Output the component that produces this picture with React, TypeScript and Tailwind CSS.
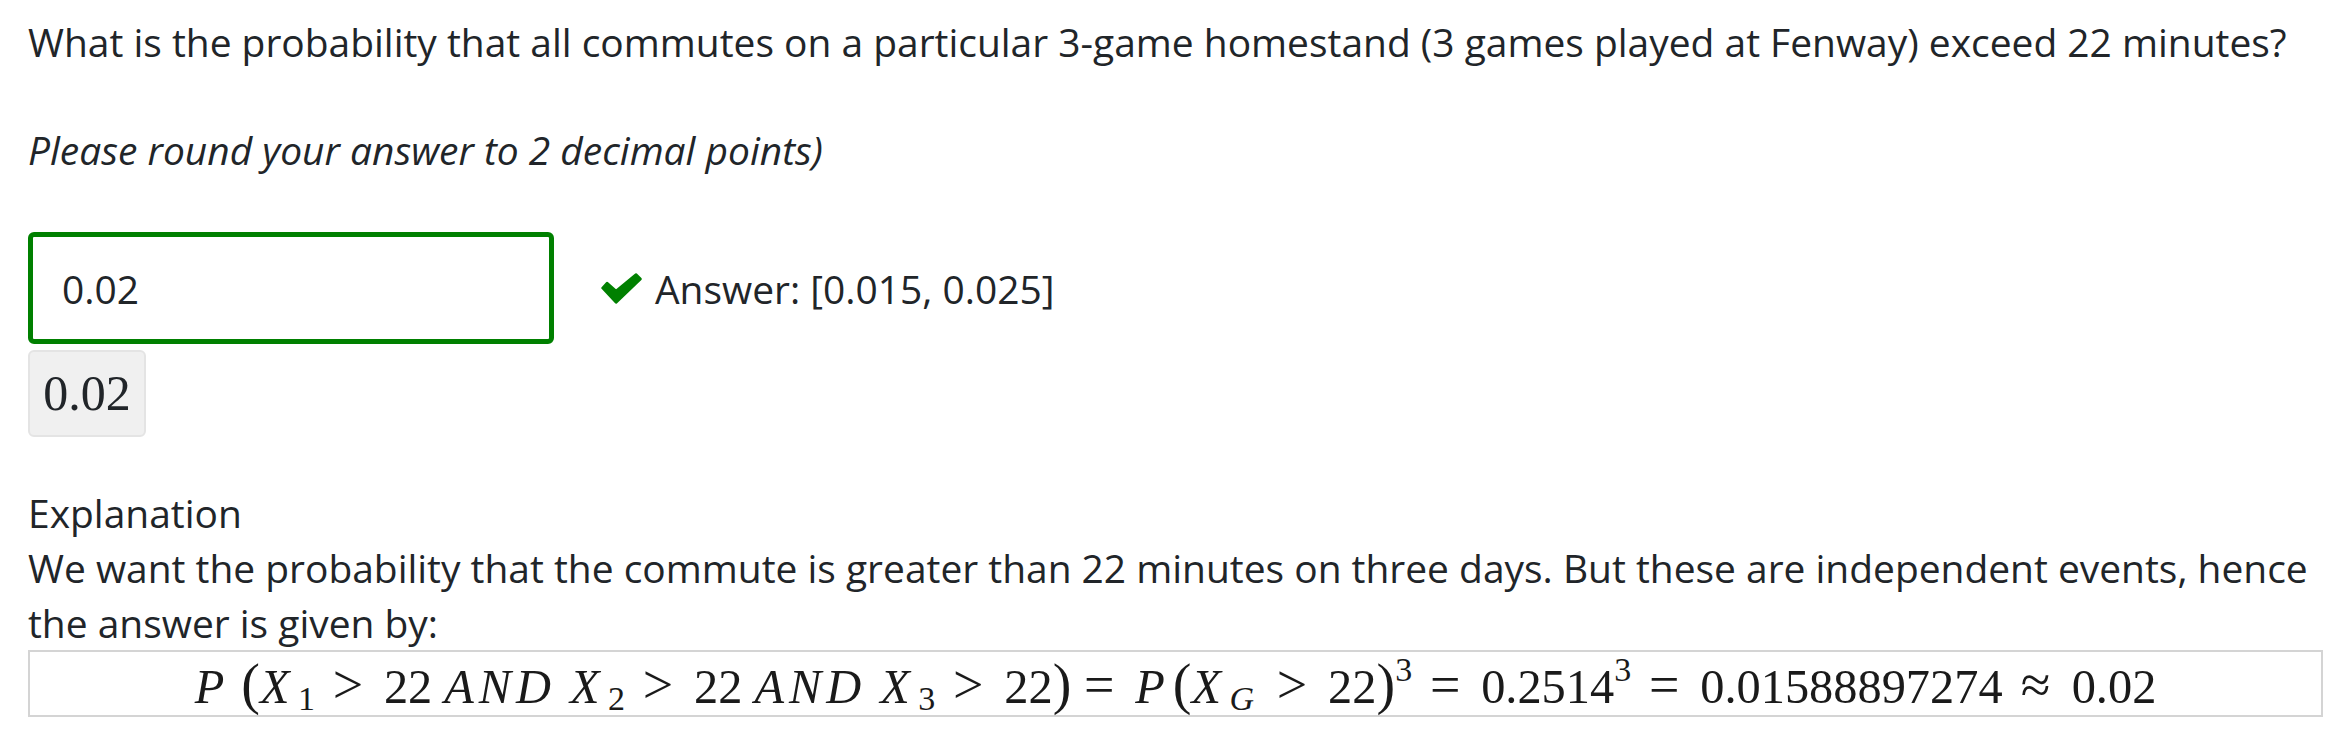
function Sub({ children }: { children: React.ReactNode }) {
  return <span className="relative top-[7px] text-[34px] not-italic leading-none">{children}</span>;
}

function Sup({ children }: { children: React.ReactNode }) {
  return <span className="relative top-[-22px] text-[34px] leading-none">{children}</span>;
}

// math italic capitals are wider in the reference than in Liberation Serif
function X() {
  return <i className="inline-block w-[38px]">X</i>;
}

function Rel({ children }: { children: React.ReactNode }) {
  return <span className="ml-[14px] mr-[17px] inline-block w-[38px] text-center text-[54px] leading-none">{children}</span>;
}

function And() {
  return <i className="ml-[12px] mr-[14px] tracking-[5px]">AND</i>;
}

function Paren({ children }: { children: React.ReactNode }) {
  return <span className="text-[56px] font-light leading-none">{children}</span>;
}

function CheckIcon() {
  return (
    <svg viewBox="0 0 41 31" className="ml-[47px] h-[31px] w-[41px]">
      <polygon
        points="6,10 15,18 35,1.5 39.5,6 15,29.5 1.5,15"
        fill="#008000"
        stroke="#008000"
        strokeWidth="2.5"
        strokeLinejoin="round"
      />
    </svg>
  );
}

export default function App() {
  return (
    <div className="w-[2350px] h-[732px] overflow-hidden bg-white pl-7 pr-[27px] pt-[14px] font-['Open_Sans',sans-serif] text-[38.93px] leading-[55px] text-[#212529]">
      <p>What is the probability that all commutes on a particular 3-game homestand (3 games played at Fenway) exceed 22 minutes?</p>
      <p className="mt-[53px] italic">Please round your answer to 2 decimal points)</p>

      <div className="mt-[55px] flex items-center">
        <div className="flex h-[112px] w-[526px] items-center rounded-[6px] border-[5px] border-[#008000] pl-[29px]">0.02</div>
        <CheckIcon />
        <span className="ml-[13px]">Answer: [0.015, 0.025]</span>
      </div>

      <div className="mt-[6px] flex h-[87px] w-[118px] items-center justify-center rounded-[6px] border-2 border-[#e4e4e4] bg-[#f0f0f0] font-['Liberation_Serif',serif] text-[50px]">0.02</div>

      <p className="mt-[48px]">Explanation</p>
      <p>We want the probability that the commute is greater than 22 minutes on three days. But these are independent events, hence the answer is given by:</p>

      <div className="flex h-[67px] items-center justify-center whitespace-pre border-2 border-[#d4d4d4] font-['Liberation_Serif',serif] text-[48.4px] leading-none text-[#1a1a1a]">
        <span>
          <i className="mr-[17px]">P</i><Paren>(</Paren><X /><Sub>1</Sub><Rel>&gt;</Rel>22<And /><X /><Sub>2</Sub><Rel>&gt;</Rel>22<And /><X /><Sub>3</Sub><Rel>&gt;</Rel>22<Paren>)</Paren><span className="ml-[-5px]"><Rel>=</Rel></span><i className="mr-[8px]">P</i><Paren>(</Paren><X /><span className="mr-[5px]"><Sub><i>G</i></Sub></span><Rel>&gt;</Rel>22<Paren>)</Paren><Sup>3</Sup><Rel>=</Rel>0.2514<Sup>3</Sup><Rel>=</Rel>0.01588897274<Rel>≈</Rel>0.02
        </span>
      </div>
    </div>
  );
}
